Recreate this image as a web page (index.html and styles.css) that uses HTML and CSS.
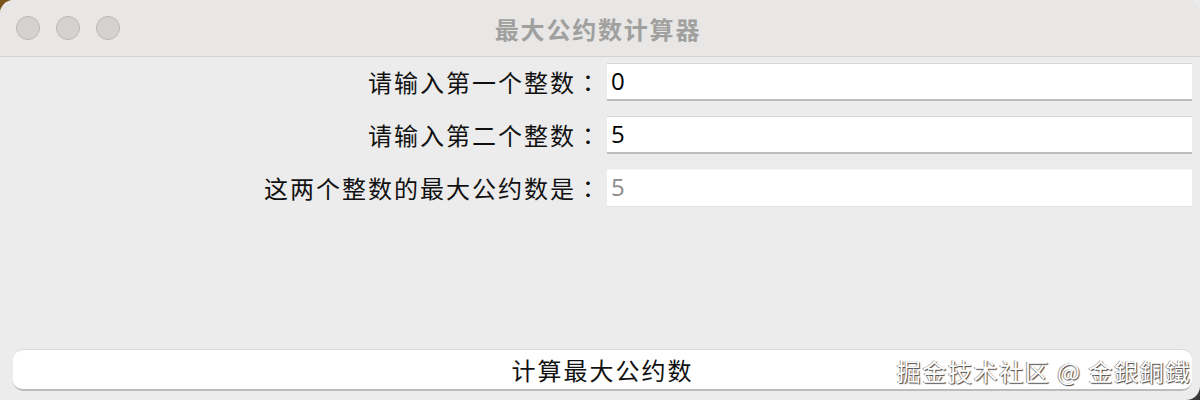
FILE: index.html
```html
<!DOCTYPE html>
<html lang="zh-CN">
<head>
<meta charset="utf-8">
<title>最大公约数计算器</title>
<link rel="stylesheet" href="styles.css">
</head>
<body>
<div class="window">
  <div class="titlebar">
    <div class="lights">
      <span class="light"></span>
      <span class="light"></span>
      <span class="light"></span>
    </div>
    <div class="title">最大公约数计算器</div>
    <div class="spacer"></div>
  </div>
  <div class="content">
    <div class="form">
      <label class="label">请输入第一个整数<span class="colon" lang="ja">：</span></label>
      <div class="field">0</div>
      <label class="label">请输入第二个整数<span class="colon" lang="ja">：</span></label>
      <div class="field">5</div>
      <label class="label">这两个整数的最大公约数是<span class="colon" lang="ja">：</span></label>
      <div class="field readonly">5</div>
    </div>
    <div class="actions">
      <button class="button">计算最大公约数</button>
      <span class="watermark">掘金技术社区 @ 金銀銅鐵</span>
    </div>
  </div>
</div>
</body>
</html>
```

FILE: styles.css
```css
html, body {
  margin: 0;
  padding: 0;
}
body {
  width: 1200px;
  height: 400px;
  overflow: hidden;
  background: linear-gradient(135deg, #7a5418 0px, #7a5418 14px, #ececec 20px, #ececec 90%, #333 100%);
  font-family: "Noto Sans CJK SC", "Noto Sans", sans-serif;
}
.window {
  width: 1200px;
  height: 400px;
  border-radius: 14px;
  overflow: hidden;
  background: #ececec;
  display: flex;
  flex-direction: column;
}
.titlebar {
  height: 56px;
  flex: none;
  background: #e8e7e6;
  border-bottom: 1px solid #d2d2d2;
  display: grid;
  grid-template-columns: 1fr auto 1fr;
  align-items: center;
}
.lights {
  display: flex;
  gap: 16px;
  padding-left: 16px;
}
.light {
  width: 24px;
  height: 24px;
  border-radius: 50%;
  background: #d4d3d2;
  border: 1px solid #b9b8b7;
  box-sizing: border-box;
}
.title {
  font-size: 24px;
  font-weight: bold;
  color: #a0a09f;
  letter-spacing: 1.8px;
  padding-right: 4px;
}
.content {
  flex: 1;
  display: flex;
  flex-direction: column;
  justify-content: space-between;
  padding: 6px 8px 9px 13px;
}
.form {
  display: grid;
  grid-template-columns: 1fr 585px;
  column-gap: 7px;
  row-gap: 15px;
}
.label {
  font-size: 24px;
  color: #111;
  text-align: right;
  line-height: 38px;
  letter-spacing: 2px;
}
.colon {
  font-family: "Noto Sans CJK JP", sans-serif;
  letter-spacing: 0;
}
.field {
  height: 38px;
  box-sizing: border-box;
  background: #fff;
  border-top: 1px solid #d6d6d6;
  border-bottom: 2px solid #bdbdbd;
  font-family: "Open Sans", "Liberation Sans", sans-serif;
  font-size: 24px;
  line-height: 34px;
  padding-left: 4px;
  color: #000;
}
.field.readonly {
  border-top: 1px solid #f4f4f4;
  border-bottom: 1px solid #e2e2e2;
  color: #8c8c8c;
}
.actions {
  display: flex;
  align-items: center;
  position: relative;
}
.button {
  width: 100%;
  height: 42px;
  background: #fff;
  border: none;
  border-top: 1px solid #d9d9d9;
  border-bottom: 2px solid #bbbbbb;
  border-radius: 10px;
  font-family: "Noto Sans CJK SC", sans-serif;
  font-size: 24px;
  color: #111;
  letter-spacing: 2px;
  padding: 0;
}
.watermark {
  position: absolute;
  right: 1px;
  top: 4px;
  font-size: 24px;
  color: #fff;
  letter-spacing: 1.6px;
  text-shadow: 1px 1px 1px #444, -1px 0 0 #999;
}
```
